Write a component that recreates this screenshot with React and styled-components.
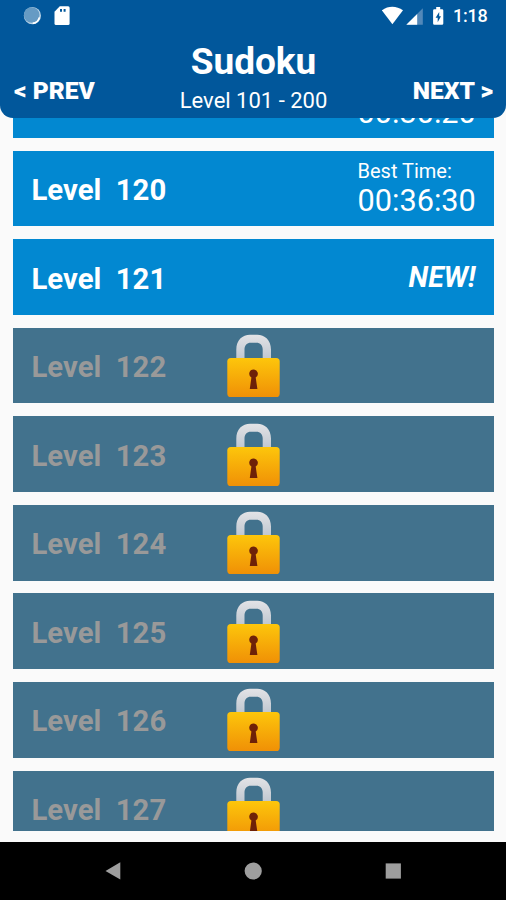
import React from "react";
import styled, { createGlobalStyle } from "styled-components";

const levels = [
  { id: 119, time: "00:30:20" },
  { id: 120, time: "00:36:30" },
  { id: 121, isNew: true },
  { id: 122, locked: true },
  { id: 123, locked: true },
  { id: 124, locked: true },
  { id: 125, locked: true },
  { id: 126, locked: true },
  { id: 127, locked: true },
];

function NotificationIcons() {
  return (
    <svg width="47" height="20" viewBox="0 0 47 20">
      <circle cx="9.4" cy="9.7" r="8.6" fill="#b9d3e6" />
      <circle cx="8.7" cy="9" r="7.8" fill="#669bc4" />
      <path
        d="M16.4 11.4a7.8 7.8 0 0 1-6.6 6"
        fill="none"
        stroke="#fff"
        strokeWidth="1.6"
      />
      <path
        d="M36.8.3h8.3q1.5 0 1.5 1.5v15.7q0 1.5-1.5 1.5H33q-1.5 0-1.5-1.5V5.8z"
        fill="#fff"
      />
      <path d="M37 3.1h2v2.6h-2zM40.6 3.1h2v2.6h-2z" fill="#01579b" />
    </svg>
  );
}

function StatusIcons() {
  return (
    <svg width="62" height="20" viewBox="0 0 62 20">
      <path d="M-.2 4.3C6.3-.4 14.5-.4 21 4.3L10.4 18.3z" fill="#fff" />
      <path d="M40.8 2.3v16.4H24.3z" fill="#5288b9" />
      <path d="M35.2 7.9v10.8H24.3z" fill="#fff" />
      <path
        d="M52.4 3.2h1.8V1h4v2.2H60q1.3 0 1.3 1.3v13q0 1.3-1.3 1.3h-7.6q-1.3 0-1.3-1.3v-13q0-1.3 1.3-1.3z"
        fill="#fff"
      />
      <path d="M57.2 5.9l-3.6 5.8h2.1v4.6l3.3-6.1h-1.8z" fill="#01579b" />
    </svg>
  );
}

function Lock() {
  return (
    <LockIcon viewBox="0 0 53 64">
      <defs>
        <linearGradient id="body" x1="0" y1="0" x2="0" y2="1">
          <stop offset="0" stopColor="#fdc60b" />
          <stop offset="1" stopColor="#f09006" />
        </linearGradient>
        <linearGradient id="shackle" x1="0" y1="0" x2="0" y2="1">
          <stop offset="0" stopColor="#e3e3e6" />
          <stop offset="1" stopColor="#bfc7d0" />
        </linearGradient>
      </defs>
      <path
        d="M9.3 25V15.5C9.3 6 15.5.7 23 .7h7.2C37.7.7 44 6 44 15.5V25h-8.3V15.5c0-4.3-2.6-6.8-6.2-6.8h-5.8c-3.6 0-6.2 2.5-6.2 6.8V25z"
        fill="url(#shackle)"
      />
      <rect x="0.3" y="24" width="52.4" height="39" rx="3.6" fill="url(#body)" />
      <path
        d="M26.5 35.4a4.3 4.3 0 0 1 2.2 8l1.7 11.7h-7.6l1.6-11.7a4.3 4.3 0 0 1 2.1-8z"
        fill="#6e2108"
      />
    </LockIcon>
  );
}

function LevelRow({ level }) {
  return (
    <Row $locked={level.locked}>
      <LevelName>{`Level  ${level.id}`}</LevelName>
      {level.locked && <Lock />}
      {level.isNew && <NewLabel>NEW!</NewLabel>}
      {level.time && (
        <Best>
          <BestTitle>Best Time:</BestTitle>
          <BestTime>{level.time}</BestTime>
        </Best>
      )}
    </Row>
  );
}

function App() {
  return (
    <Screen>
      <GlobalStyle />
      <Header>
        <StatusBar>
          <Notifications>
            <NotificationIcons />
          </Notifications>
          <StatusIcons />
          <Clock>1:18</Clock>
        </StatusBar>
        <Toolbar>
          <PageButton>&lt; PREV</PageButton>
          <Heading>
            <Title>Sudoku</Title>
            <Range>Level 101 - 200</Range>
          </Heading>
          <PageButton $right>NEXT &gt;</PageButton>
        </Toolbar>
      </Header>
      <LevelList>
        {levels.map((level) => (
          <LevelRow key={level.id} level={level} />
        ))}
      </LevelList>
      <NavBar>
        <svg width="16" height="18" viewBox="0 0 16 18">
          <path d="M15.3.3v17.2L.5 8.9z" fill="#9e9e9e" />
        </svg>
        <svg width="18" height="18" viewBox="0 0 18 18">
          <circle cx="9.2" cy="9" r="8.6" fill="#9e9e9e" />
        </svg>
        <svg width="16" height="18" viewBox="0 0 16 18">
          <rect x="0.7" y="1.4" width="15.2" height="15.2" fill="#9e9e9e" />
        </svg>
      </NavBar>
    </Screen>
  );
}

export default App;

const GlobalStyle = createGlobalStyle`
  body {
    margin: 0;
    background: #fafafa;
    font-family: Roboto, "Liberation Sans", sans-serif;
  }

  svg {
    display: block;
    flex-shrink: 0;
  }
`;

const Screen = styled.div`
  display: flex;
  flex-direction: column;
  width: 506px;
  height: 900px;
  overflow: hidden;
  background: #fafafa;
`;

const Header = styled.header`
  flex: none;
  height: 118px;
  box-sizing: border-box;
  color: #fff;
  background: #01579b;
  border-radius: 0 0 13px 13px;
`;

const StatusBar = styled.div`
  display: flex;
  align-items: center;
  height: 31px;
  padding: 0 19px 0 23px;
`;

const Notifications = styled.div`
  flex: 1;
`;

const Clock = styled.span`
  width: 34px;
  margin-left: 9px;
  font-size: 18px;
  font-weight: 500;
  line-height: 32px;
  letter-spacing: -0.2px;
  white-space: nowrap;
`;

const Toolbar = styled.div`
  display: flex;
  align-items: flex-end;
  padding: 0 13px 0 14px;
`;

const PageButton = styled.div`
  flex: 1 0 0;
  padding-bottom: 7px;
  font-size: 24.6px;
  font-weight: 900;
  line-height: 28px;
  white-space: nowrap;
  text-align: ${(props) => (props.$right ? "right" : "left")};
`;

const Heading = styled.div`
  display: flex;
  flex-direction: column;
  align-items: center;
  height: 81px;
  padding-top: 9px;
  box-sizing: border-box;
`;

const Title = styled.h1`
  margin: 0;
  font-size: 37px;
  font-weight: 700;
  line-height: 44px;
`;

const Range = styled.div`
  margin-top: 4px;
  font-size: 22px;
  line-height: 26px;
  white-space: nowrap;
`;

const LevelList = styled.main`
  display: flex;
  flex: none;
  flex-direction: column;
  gap: 12.9px;
  height: 713px;
  padding: 0 12px 0 13px;
  overflow: hidden;
  box-sizing: border-box;

  > :first-child {
    margin-top: -56px;
  }
`;

const Row = styled.div`
  display: grid;
  grid-template-columns: 1fr 53px 1fr;
  flex: none;
  align-items: center;
  height: 75.7px;
  padding: 0 18.5px;
  box-sizing: border-box;
  color: ${(props) => (props.$locked ? "#999" : "#fff")};
  background: ${(props) => (props.$locked ? "#42728d" : "#0288d1")};
`;

const LevelName = styled.div`
  font-size: 29.3px;
  font-weight: 700;
  line-height: 36px;
  white-space: pre;
  padding-top: 3px;
`;

const LockIcon = styled.svg`
  width: 53px;
  height: 64px;
  margin-top: 1px;
`;

const NewLabel = styled.div`
  grid-column: 3;
  justify-self: end;
  font-size: 28.6px;
  font-style: italic;
  font-weight: 700;
`;

const Best = styled.div`
  grid-column: 3;
  justify-self: end;
  width: 118px;
  padding-top: 2px;
  white-space: nowrap;
`;

const BestTitle = styled.div`
  font-size: 20px;
  line-height: 24px;
`;

const BestTime = styled.div`
  font-size: 30.7px;
  line-height: 36px;
`;

const NavBar = styled.nav`
  display: flex;
  align-items: center;
  justify-content: space-between;
  height: 58px;
  margin-top: auto;
  padding: 0 105px;
  box-sizing: border-box;
  background: #000;
`;
